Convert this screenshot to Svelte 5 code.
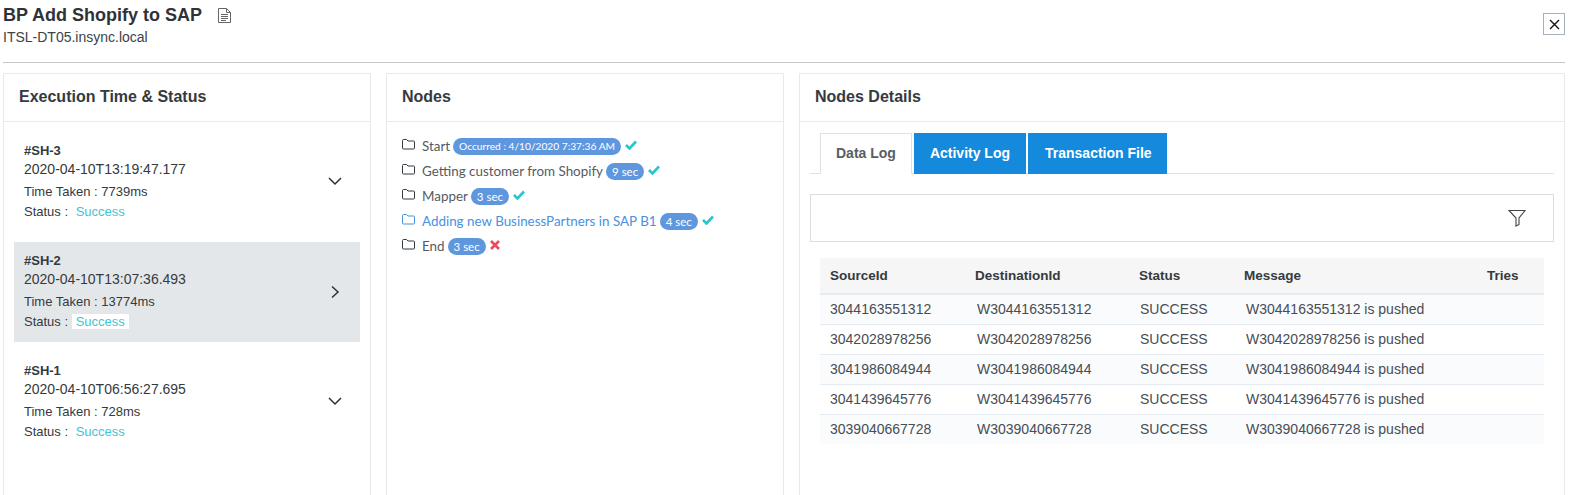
<script>
  const runs = [
    { id: '#SH-3', ts: '2020-04-10T13:19:47.177', ms: '7739ms', open: false },
    { id: '#SH-2', ts: '2020-04-10T13:07:36.493', ms: '13774ms', open: true },
    { id: '#SH-1', ts: '2020-04-10T06:56:27.695', ms: '728ms', open: false }
  ];
  const nodes = [
    { name: 'Start', badge: 'Occurred : 4/10/2020 7:37:36 AM', small: true, ok: true },
    { name: 'Getting customer from Shopify', badge: '9 sec', ok: true },
    { name: 'Mapper', badge: '3 sec', ok: true },
    { name: 'Adding new BusinessPartners in SAP B1', badge: '4 sec', ok: true, active: true },
    { name: 'End', badge: '3 sec', ok: false }
  ];
  const ids = ['3044163551312', '3042028978256', '3041986084944', '3041439645776', '3039040667728'];
</script>

<div class="page">
  <header class="top">
    <div>
      <div class="title-row">
        <h1>BP Add Shopify to SAP</h1>
        <svg class="doc" width="13" height="15" viewBox="0 0 13 15" fill="none" stroke="#666" stroke-width="1">
          <path d="M.5 .5h8l4 4v10h-12z" />
          <path d="M8.500 .5v4h4M3 6.500h7M3 8.500h7M3 10.500h7M3 12.500h5" />
        </svg>
      </div>
      <div class="host">ITSL-DT05.insync.local</div>
    </div>
    <button class="close" aria-label="Close">
      <svg width="11" height="11" viewBox="0 0 11 11" stroke="#111" stroke-width="1.400"><path d="M1 1l9 9M10 1l-9 9" /></svg>
    </button>
  </header>

  <div class="cols">
    <section class="card c1">
      <h2>Execution Time &amp; Status</h2>
      <div class="runs">
        {#each runs as r}
          <div class="run" class:sel={r.open}>
            <div class="info">
              <b>{r.id}</b>
              <div class="ts">{r.ts}</div>
              <div class="line l1">Time Taken : {r.ms}</div>
              <div class="line">Status : <span class="succ">Success</span></div>
            </div>
            <svg class="chev" width="14" height="14" viewBox="0 0 14 14" fill="none" stroke="#2b3038" stroke-width="1.500">
              {#if r.open}
                <path d="M4 1.500l6 5.500-6 5.500" />
              {:else}
                <path d="M1 3l6 6 6-6" />
              {/if}
            </svg>
          </div>
        {/each}
      </div>
    </section>

    <section class="card c2">
      <h2>Nodes</h2>
      <ul class="nodes">
        {#each nodes as n}
          <li class:active={n.active}>
            <svg class="folder" width="13" height="11" viewBox="0 0 13 11" fill="none" stroke="currentColor" stroke-width="1">
              <path d="M.500 9v-7.500q0-1 1-1h3l1.500 1.500h5.500q1 0 1 1v6q0 1-1 1h-10q-1 0-1-1z" />
            </svg>
            <span class="nm">{n.name}</span>
            <span class="badge" class:small={n.small}>{n.badge}</span>
            {#if n.ok}
              <svg class="st" width="12" height="10" viewBox="0 0 12 10" fill="none" stroke="#2cc4cb" stroke-width="2.600"><path d="M1 5l3.500 3.500L11 1.500" /></svg>
            {:else}
              <svg class="st" width="10" height="10" viewBox="0 0 10 10" fill="none" stroke="#ea4a5f" stroke-width="2.600"><path d="M1 1l8 8M9 1l-8 8" /></svg>
            {/if}
          </li>
        {/each}
      </ul>
    </section>

    <section class="card c3">
      <h2>Nodes Details</h2>
      <div class="body">
        <div class="tabs">
          <div class="tab on">Data Log</div>
          <div class="tab">Activity Log</div>
          <div class="tab">Transaction File</div>
        </div>
        <div class="filter">
          <svg width="18" height="18" viewBox="0 0 18 18" fill="none" stroke="#444" stroke-width="1.100">
            <path d="M1 1.500h16L11 9v6.500l-3 1.500V9z" />
          </svg>
        </div>
        <table>
          <thead>
            <tr><th class="a">SourceId</th><th class="b">DestinationId</th><th class="c">Status</th><th class="d">Message</th><th class="e">Tries</th></tr>
          </thead>
          <tbody>
            {#each ids as id}
              <tr><td class="a">{id}</td><td class="b">W{id}</td><td class="c">SUCCESS</td><td class="d">W{id} is pushed</td><td class="e"></td></tr>
            {/each}
          </tbody>
        </table>
      </div>
    </section>
  </div>
</div>

<style>
  :global(body) { margin: 0; background: #fff; }
  .page {
    width: 1573px; height: 495px; overflow: hidden; box-sizing: border-box;
    padding: 0 8px 0 3px;
    font-family: "Liberation Sans", Arial, sans-serif; color: #343a40;
  }
  .top {
    height: 62px; border-bottom: 1px solid #c4c6c8;
    display: flex; justify-content: space-between; align-items: flex-start;
  }
  .title-row { display: flex; align-items: center; height: 30px; }
  h1 { margin: 0; font-size: 18px; font-weight: 700; color: #2f3338; }
  .doc { margin-left: 16px; }
  .host { font-size: 14px; line-height: 17px; margin-top: -1px; color: #3d4248; }
  .close {
    width: 22px; height: 22px; padding: 0; margin-top: 13px; background: #fff;
    border: 1px solid #a6b2bd; display: flex; align-items: center; justify-content: center;
  }
  .cols { display: flex; margin-top: 10px; }
  .card {
    box-sizing: border-box; height: 430px; border: 1px solid #e8ebee; background: #fff; flex: none;
  }
  .c1 { width: 368px; }
  .c2 { width: 398px; margin-left: 15px; }
  .c3 { width: 766px; margin-left: 15px; }
  h2 {
    margin: 0; box-sizing: border-box; height: 48px; line-height: 46px; padding-left: 15px;
    border-bottom: 1px solid #e8ebee; font-size: 16px; font-weight: 700; color: #343a40;
  }
  .runs { padding: 10px 10px 0; display: flex; flex-direction: column; }
  .run {
    height: 100px; padding: 0 16px 0 10px; box-sizing: border-box; margin-bottom: 10px;
    display: flex; justify-content: space-between; align-items: center;
  }
  .run.sel { background: #e4e7ea; }
  .info { align-self: flex-start; font-size: 13px; padding-top: 12px; }
  .info b { display: block; font-size: 13px; line-height: 14px; color: #343a40; }
  .ts { font-size: 14px; line-height: 18px; margin-top: 2px; }
  .line { line-height: 20px; }
  .l1 { margin-top: 4px; }
  .succ { color: #3fc4d8; padding: 0 4px; }
  .sel .succ { background: #fff; }
  .chev { margin-right: 2px; }
  .nodes { list-style: none; margin: 0; padding: 11px 15px 0; font-family: Lato, "Open Sans", sans-serif; font-size: 13.400px; }
  .nodes li { height: 25px; display: flex; align-items: center; color: #555b62; white-space: nowrap; }
  .nodes li.active { color: #4a90e2; }
  .folder { margin-right: 7px; position: relative; top: -1px; color: #343a40; }
  .active .folder { color: #4a90e2; }
  .badge {
    margin-left: 3px; background: #5f97df; color: #fff; border-radius: 9px; height: 17px; line-height: 17px;
    padding: 0 6px; font-size: 11.500px; position: relative; top: 1px;
  }
  .badge.small { font-size: 10.200px; }
  .st { margin-left: 4px; position: relative; top: -1px; }
  .body { padding: 11px 10px 0 10px; }
  .tabs { display: flex; gap: 2px; height: 40px; border-bottom: 1px solid #dee2e6; padding-left: 10px; }
  .tab {
    padding: 0 16px; background: #1589dc; color: #fff; font-weight: 700; font-size: 14px;
    line-height: 40px; height: 41px; box-sizing: border-box;
  }
  .tab:last-child { padding: 0 15px 0 17px; }
  .tab.on {
    background: #fff; color: #585e64; border: 1px solid #dee2e6; border-bottom: 0; padding: 0 15px; line-height: 38px;
  }
  .filter {
    margin-top: 20px; height: 48px; box-sizing: border-box; border: 1px solid #dcdfe2;
    display: flex; align-items: center; justify-content: flex-end; padding-right: 27px;
  }
  table { border-collapse: collapse; margin: 16px 10px 0; width: 724px; table-layout: fixed; font-size: 14px; }
  th { background: #f6f6f6; height: 35px; padding: 0; text-align: left; font-size: 13.500px; font-weight: 700; border-bottom: 2px solid #e6ebf1; color: #343a40; }
  td { height: 30px; padding: 0; box-sizing: border-box; border-bottom: 1px solid #e6ebf1; background: #fafbfd; color: #474d54; }
  tbody tr:nth-child(even) td { background: #fff; }
  tbody tr:last-child td { border-bottom: 0; }
  .a { width: 145px; padding-left: 10px; }
  .b { width: 164px; }
  .c { width: 105px; }
  .d { width: 242px; }
  th.e { padding-left: 1px; }
  td.b { padding-left: 2px; }
  td.c { padding-left: 1px; }
  td.d { padding-left: 2px; }
</style>
